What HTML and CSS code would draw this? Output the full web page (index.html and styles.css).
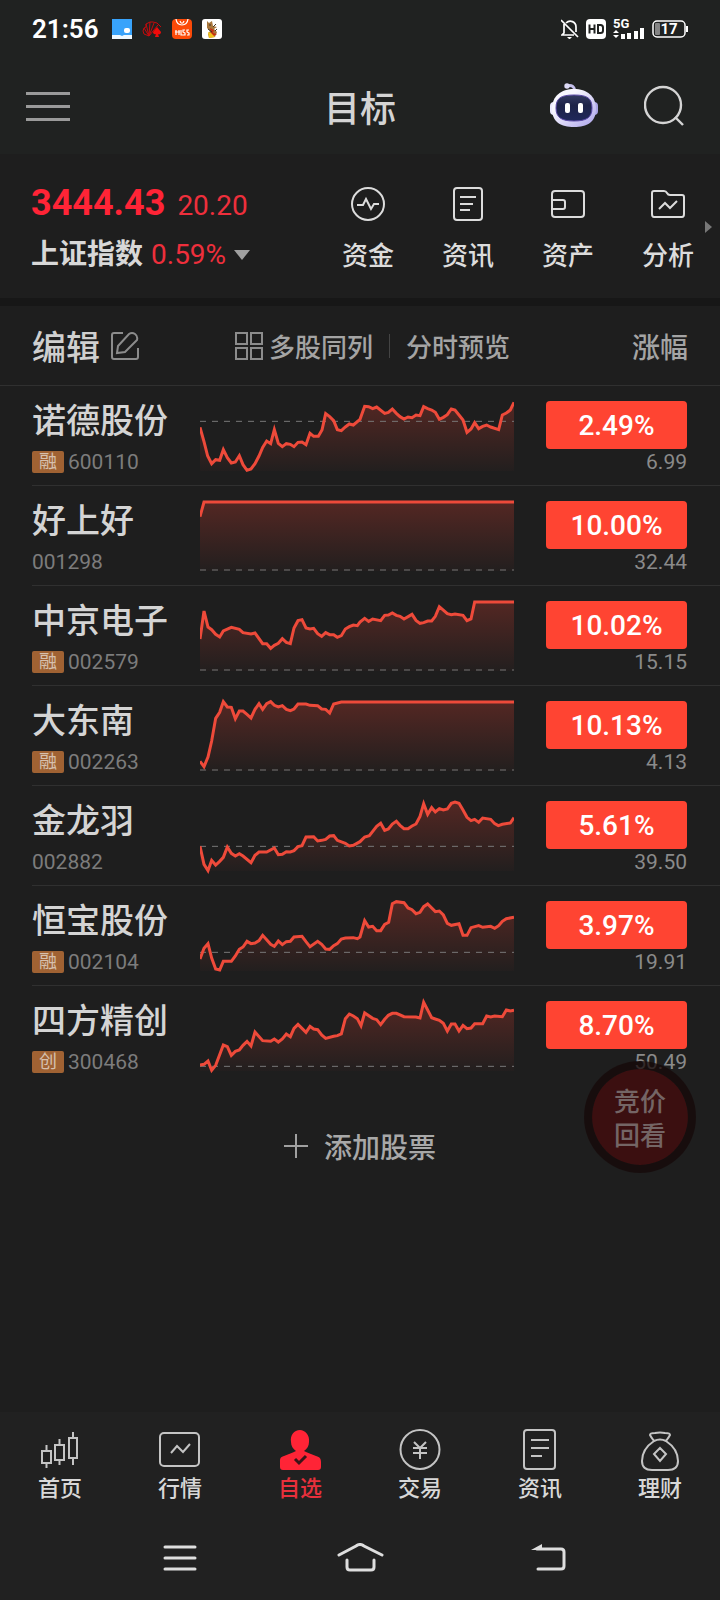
FILE: index.html
```html
<!DOCTYPE html>
<html lang="zh-CN">
<head>
    <meta charset="UTF-8">
    <meta name="viewport" content="width=device-width, initial-scale=1.0">
    <title>自选</title>
    <link rel="stylesheet" href="styles.css">
</head>
<body>

    <div class="status-bar">
        <span class="time">21:56</span>
        <div class="status-apps">
            <svg width="20" height="20" viewBox="0 0 20 20"><rect width="20" height="20" fill="#38a3fb"/><path d="M0 16h8l2 1 2-1h8v4H0z" fill="#eef8ff"/><rect x="12" y="9" width="6" height="5" rx="2" fill="#fff"/></svg>
            <svg width="20" height="20" viewBox="0 0 20 20" fill="none" stroke="#c4090c" stroke-width="1"><path d="M7 17L2 15l-1-3 1-3 2-1 0-3 4-2 3 0 4 1 4 4M7 17L2 9M7 17L4 5M7 17L8 3M7 17l5-13M7 17l9-11"/><path d="M15 8l4 5c0 2-2 3-3 2l1 3h-4l1-3c-2 1-3-1-3-2z" fill="#f00a0a" stroke="none"/></svg>
            <svg width="20" height="20" viewBox="0 0 20 20" fill="none" stroke="#fff" stroke-width="1.2"><rect width="20" height="20" rx="4" fill="#fb4a08" stroke="none"/><path d="M4 0c1 8 11 8 12 0M8 2c1 3 3 3 4 0M4 11v5M7 11v5M3 13h5M9 11v5h2M13 11h-2v2l2 1v2h-2M17 11h-2v2l2 1v2h-2"/></svg>
            <svg width="20" height="20" viewBox="0 0 20 20"><rect width="20" height="20" rx="3" fill="#fff"/><path d="M5 2l2 2 3-2 1 5 4 1-3 2 3 3-2 5-6 1-1-4 2-3-3-3z" fill="#a8773c"/><path d="M8 9l4 2-1 3 4 1-5 3z" fill="#c62f12"/><path d="M6 13l3 1 4 4-6 1z" fill="#f2c21c"/><path d="M7 6h2M11 8l3-3M6 10l4 3M13 12l2-2" stroke="#432" stroke-width="1"/></svg>
        </div>
        <div class="status-icons">
            <svg width="18" height="20" viewBox="0 0 18 20" fill="none" stroke="#fff" stroke-width="1.7"><path d="M3 5v9l-2 2h12M5 4c4-4 10-1 10 4v5M0 1l17 17"/><path d="M6 18h5l-2 2H8z" fill="#fff" stroke="none"/></svg>
            <svg width="20" height="20" viewBox="0 0 20 20"><rect width="20" height="20" rx="4" fill="#fff"/><path d="M3.500 5.500v9M8.500 5.500v9M3.500 10h5M12 6v8h2.500q2.500 0 2.500-2.500v-3q0-2.500-2.500-2.500z" fill="none" stroke="#202221" stroke-width="2"/></svg>
            <svg width="32" height="24" viewBox="0 -2 32 24" fill="#fff"><text x="0" y="9" class="net-text">5G</text><path d="M0 14l3-3 3 3zM0 16h6l-3 3zM8 15h4v5H8zM14 14h4v6h-4zM21 12h4v8h-4zM27 9h4v11h-4z"/></svg>
            <svg width="36" height="18" viewBox="0 0 36 18"><rect x="1" y="1" width="32" height="16" rx="4" fill="none" stroke="#fff" stroke-width="1.500"/><rect x="3" y="3" width="5" height="12" rx="1" fill="#858585"/><path d="M35 6v6" stroke="#fff" stroke-width="2"/><text x="17" y="14" text-anchor="middle" class="battery-text" fill="#fff">17</text></svg>
        </div>
    </div>

    <header class="header">
        <button class="icon-btn menu-btn" aria-label="菜单">
            <svg width="44" height="30" viewBox="0 0 44 30" stroke="#9a9a9a" stroke-width="3"><path d="M0 2.500h44M0 15.500h44M0 28.500h44"/></svg>
        </button>
        <h1>目标</h1>
        <div class="header-actions">
            <button class="icon-btn" aria-label="助手">
                <svg width="48" height="46" viewBox="0 0 48 46">
                    <defs>
                        <linearGradient id="robotHead" x1="0" y1="0" x2="1" y2="1"><stop offset="0.300" stop-color="#f8f7ff"/><stop offset="1" stop-color="#aaa2ea"/></linearGradient>
                        <linearGradient id="robotFace" x1="0" y1="0" x2="0" y2="1"><stop offset="0" stop-color="#343a62"/><stop offset="0.400" stop-color="#1d2348"/><stop offset="1" stop-color="#20285a"/></linearGradient>
                    </defs>
                    <path d="M17 3q7-2 8 5" fill="none" stroke="#c5c0ec" stroke-width="3"/>
                    <circle cx="17" cy="3" r="2.700" fill="#dddaf6"/>
                    <rect x="0" y="19" width="9" height="13" rx="4" fill="#eceaff"/>
                    <rect x="39" y="19" width="9" height="13" rx="4" fill="#aba5e6"/>
                    <path d="M24 6C11 6 2 13 2 26s9 18 22 18 22-5 22-18S37 6 24 6z" fill="url(#robotHead)"/>
                    <path d="M24 12c-13 0-18 3-18 13s6 13 18 13 18-3 18-13-5-13-18-13z" fill="url(#robotFace)" stroke="#5b49a8" stroke-width="1"/>
                    <rect x="15" y="20" width="5" height="10" rx="2" fill="#fff"/>
                    <rect x="28" y="20" width="5" height="10" rx="2" fill="#fff"/>
                </svg>
            </button>
            <button class="icon-btn" aria-label="搜索">
                <svg width="40" height="42" viewBox="0 0 40 42" fill="none" stroke="#d4d4d4" stroke-width="2.400"><circle cx="19" cy="20" r="18"/><path d="M31 32l8 8"/></svg>
            </button>
        </div>
    </header>

    <section class="summary">
        <button class="index">
            <span class="index-top"><b>3444.43</b><span>20.20</span></span>
            <span class="index-bottom"><strong>上证指数</strong><span>0.59%</span><i class="arrow-down"></i></span>
        </button>
        <nav class="shortcuts">
            <a href="#">
                <svg width="34" height="34" viewBox="0 0 34 34"><circle cx="17" cy="17" r="16"/><path d="M6 18h6l3-6 5 10 3-5h5"/></svg>
                资金
            </a>
            <a href="#">
                <svg width="34" height="34" viewBox="0 0 34 34"><rect x="3" y="1" width="28" height="32" rx="3"/><path d="M9 10h16M9 17h13M9 23h10"/></svg>
                资讯
            </a>
            <a href="#">
                <svg width="34" height="34" viewBox="0 0 34 34"><rect x="1" y="4" width="32" height="26" rx="3"/><path d="M1 13h11q2 0 2 2v5q0 2-2 2H1"/></svg>
                资产
            </a>
            <a href="#">
                <svg width="34" height="34" viewBox="0 0 34 34"><path d="M1 27V6q0-2 2-2h10q2 0 3 2t3 2h12q2 0 2 2v17q0 3-2 3H3q-2 0-2-3z"/><path d="M8 22l6-6 5 5 7-7"/></svg>
                分析
            </a>
        </nav>
        <i class="arrow-right"></i>
    </section>

    <main class="watchlist">
        <div class="toolbar">
            <button class="edit-btn">
                编辑
                <svg width="30" height="30" viewBox="0 0 30 30"><path d="M13 2H4Q2 2 2 4v22q0 2 2 2h22q2 0 2-2V17"/><path d="M7 22l1-7L19 3q3-2 6 0t2 6L15 21z"/></svg>
            </button>
            <button class="multi-btn">
                <svg width="28" height="28" viewBox="0 0 28 28"><path d="M1 1h11v11H1zM16 1h11v11H16zM1 16h11v11H1zM16 16h11v11H16z"/></svg>
                多股同列
            </button>
            <span class="divider"></span>
            <button>分时预览</button>
            <button class="sort-btn">涨幅</button>
        </div>

        <svg class="chart-defs" aria-hidden="true">
            <defs>
                <linearGradient id="chartFill" gradientUnits="userSpaceOnUse" x1="0" y1="50" x2="0" y2="258">
                    <stop offset="0" stop-color="#ff4432" stop-opacity="0.240"/>
                    <stop offset="1" stop-color="#ff4432" stop-opacity="0.020"/>
                </linearGradient>
            </defs>
        </svg>

        <ul class="stocks">
            <li class="stock">
                <div class="stock-info">
                    <h2>诺德股份</h2>
                    <p><span class="tag">融</span>600110</p>
                </div>
                <svg class="chart" viewBox="0 3 942 297" preserveAspectRatio="none" data-base="109" data-points="0,127 12,170 23,213 35,236 47,224 59,226 70,194 82,218 94,234 106,231 118,212 129,239 141,256 153,252 165,236 177,213 188,187 200,168 212,176 223,134 235,175 247,185 259,176 271,178 282,185 294,172 306,171 318,179 330,145 341,154 355,154 366,135 377,86 389,95 401,107 412,134 424,137 436,126 448,117 460,120 480,103 494,64 506,65 518,71 530,66 554,85 565,82 577,72 589,85 600,95 612,102 624,96 636,98 648,90 660,92 671,65 683,71 695,75 706,82 718,103 730,97 742,89 754,72 765,75 777,90 789,105 801,142 813,132 824,113 836,131 848,124 860,120 872,126 896,134 907,90 919,84 931,75 942,52"></svg>
                <div class="stock-quote">
                    <button class="change">2.49%</button>
                    <span class="price">6.99</span>
                </div>
            </li>
            <li class="stock">
                <div class="stock-info">
                    <h2>好上好</h2>
                    <p>001298</p>
                </div>
                <svg class="chart" viewBox="0 3 942 297" preserveAspectRatio="none" data-base="255" data-points="0,95 12,51 942,51"></svg>
                <div class="stock-quote">
                    <button class="change">10.00%</button>
                    <span class="price">32.44</span>
                </div>
            </li>
            <li class="stock">
                <div class="stock-info">
                    <h2>中京电子</h2>
                    <p><span class="tag">融</span>002579</p>
                </div>
                <svg class="chart" viewBox="0 3 942 297" preserveAspectRatio="none" data-base="255" data-points="0,162 12,78 24,126 35,134 47,148 59,156 70,138 94,127 118,133 129,143 153,147 165,144 188,176 200,176 212,190 223,181 235,175 247,161 259,172 271,176 282,129 294,107 306,104 318,129 330,132 341,130 353,146 365,154 377,143 389,149 401,149 412,157 424,152 436,132 448,125 460,120 472,122 480,111 494,100 506,109 518,102 542,107 554,91 565,90 577,84 589,91 600,94 612,102 636,88 648,106 660,115 671,113 683,108 695,108 706,94 718,65 742,86 754,89 765,87 789,91 801,107 813,102 824,51 942,51"></svg>
                <div class="stock-quote">
                    <button class="change">10.02%</button>
                    <span class="price">15.15</span>
                </div>
            </li>
            <li class="stock">
                <div class="stock-info">
                    <h2>大东南</h2>
                    <p><span class="tag">融</span>002263</p>
                </div>
                <svg class="chart" viewBox="0 3 942 297" preserveAspectRatio="none" data-base="255" data-points="0,229 12,245 24,216 35,168 47,100 59,82 70,50 82,66 94,67 106,101 118,78 129,78 141,88 153,99 165,73 177,56 188,73 200,56 212,50 223,61 235,66 247,62 259,73 271,77 282,72 294,57 318,57 330,61 353,62 365,72 377,73 389,84 401,57 424,51 942,51"></svg>
                <div class="stock-quote">
                    <button class="change">10.13%</button>
                    <span class="price">4.13</span>
                </div>
            </li>
            <li class="stock">
                <div class="stock-info">
                    <h2>金龙羽</h2>
                    <p>002882</p>
                </div>
                <svg class="chart" viewBox="0 3 942 297" preserveAspectRatio="none" data-base="184" data-points="0,184 12,238 24,257 35,226 47,240 59,229 70,217 82,186 94,205 106,213 118,206 129,213 153,233 165,211 177,201 200,201 223,189 235,209 247,208 259,200 271,201 282,197 294,185 306,182 318,156 341,155 353,168 365,166 377,163 389,153 401,152 412,166 436,175 448,183 460,181 480,170 494,156 508,152 530,124 542,115 554,136 565,132 577,117 589,109 600,121 612,131 624,131 636,123 648,117 660,94 671,56 683,88 695,68 706,81 718,71 730,75 742,72 754,55 765,51 777,55 789,75 801,97 813,107 824,103 836,112 848,99 872,103 884,116 895,122 907,118 931,114 942,98"></svg>
                <div class="stock-quote">
                    <button class="change">5.61%</button>
                    <span class="price">39.50</span>
                </div>
            </li>
            <li class="stock">
                <div class="stock-info">
                    <h2>恒宝股份</h2>
                    <p><span class="tag">融</span>002104</p>
                </div>
                <svg class="chart" viewBox="0 3 942 297" preserveAspectRatio="none" data-base="202" data-points="0,222 12,190 24,176 35,219 47,252 59,255 70,229 94,229 106,213 118,193 129,186 141,169 153,176 165,174 177,167 188,151 200,164 212,178 223,184 235,168 247,179 259,170 271,169 282,156 306,154 318,170 330,185 353,169 365,178 377,192 389,193 401,182 412,176 424,162 436,159 460,158 472,161 480,156 494,107 506,126 518,124 530,137 542,137 554,118 566,112 577,56 589,50 612,53 624,69 636,74 648,86 660,82 671,65 683,57 706,80 718,78 730,90 742,115 754,121 777,116 789,151 801,151 813,128 836,122 848,127 872,124 884,130 896,122 907,109 919,101 942,97"></svg>
                <div class="stock-quote">
                    <button class="change">3.97%</button>
                    <span class="price">19.91</span>
                </div>
            </li>
            <li class="stock">
                <div class="stock-info">
                    <h2>四方精创</h2>
                    <p><span class="tag">创</span>300468</p>
                </div>
                <svg class="chart" viewBox="0 3 942 297" preserveAspectRatio="none" data-base="244" data-points="0,240 12,238 24,228 35,256 47,241 70,180 82,185 94,211 106,199 118,195 129,181 141,169 153,183 165,141 188,167 212,169 223,162 235,171 247,162 259,147 271,155 282,130 294,118 318,142 330,124 341,132 353,134 365,150 377,160 401,154 412,152 424,147 436,101 448,87 460,93 472,101 483,122 494,84 518,100 530,104 542,119 554,103 565,91 577,85 589,85 612,95 648,96 660,99 671,52 695,98 706,102 718,106 730,115 742,138 754,117 765,117 777,138 789,121 801,131 813,129 824,116 848,116 860,93 872,96 884,93 907,95 919,75 931,78 942,76"></svg>
                <div class="stock-quote">
                    <button class="change">8.70%</button>
                    <span class="price">50.49</span>
                </div>
            </li>
        </ul>

        <div class="add-row">
            <button class="add-btn">
                <svg width="24" height="24" viewBox="0 0 24 24" stroke="#a0a0a0" stroke-width="2"><path d="M0 12h24M12 0v24"/></svg>
                添加股票
            </button>
            <button class="replay-btn">竞价<br>回看</button>
        </div>
    </main>

    <nav class="tab-bar">
        <a href="#">
            <svg width="42" height="42" viewBox="0 0 42 42"><path d="M3 22h9v12H3zM7.500 16v6M7.500 34v5M16 16h9v15h-9zM20.500 10v6M20.500 31v5M30 9h8v20h-8zM34 3v6M34 29v7"/></svg>
            首页
        </a>
        <a href="#">
            <svg width="42" height="42" viewBox="0 0 42 42"><rect x="1" y="4" width="39" height="33" rx="4"/><path d="M12 24l6-7 6 6 7-8"/></svg>
            行情
        </a>
        <a href="#" class="active">
            <svg width="42" height="42" viewBox="0 0 42 42"><path class="solid" d="M21 1c-6 0-10 5-9 12 0 4 2 7 5 9-3 2-8 3-12 5-4 1-4 3-4 6v5q0 3 3 3h35q3 0 3-3v-5c0-3-1-5-5-6-4-2-9-3-12-5 3-2 5-5 5-9 1-7-4-12-9-12z"/><path class="tick" d="M16 30l4 4 7-7"/></svg>
            自选
        </a>
        <a href="#">
            <svg width="42" height="42" viewBox="0 0 42 42"><circle cx="21" cy="20.500" r="19.500"/><path d="M15 13l6 6 6-6M14 19h14M14 24h14M21 19v11"/></svg>
            交易
        </a>
        <a href="#">
            <svg width="42" height="42" viewBox="0 0 42 42"><rect x="5" y="1" width="31" height="39" rx="3"/><path d="M12 11h18M12 19h18M12 27h11"/></svg>
            资讯
        </a>
        <a href="#">
            <svg width="42" height="42" viewBox="0 0 42 42"><path d="M15 12q-3-4-4-6 0-2 5-2 5-1 10 0 5 0 5 2-1 2-4 6M15 12q6-3 12 0 12 8 12 20 0 9-10 9H13Q3 41 3 32q0-12 12-20zM21 19l6 6-6 7-6-7z"/></svg>
            理财
        </a>
    </nav>

    <div class="system-nav">
        <button class="icon-btn" aria-label="最近任务"><svg width="60" height="30" viewBox="0 0 60 30"><path d="M15 4h30M15 15h30M15 26h30"/></svg></button>
        <button class="icon-btn" aria-label="主页"><svg width="60" height="30" viewBox="0 0 60 30"><path d="M9 12L26 3q4-3 8 0l18 9M17 17v7q0 3 3 3h21q3 0 3-3v-7"/></svg></button>
        <button class="icon-btn" aria-label="返回"><svg width="60" height="30" viewBox="0 0 60 30"><path d="M27 6h24q3 0 3 3v14q0 3-3 3H28"/><path class="head" d="M21 7l11-6v6z"/></svg></button>
    </div>

    <script src="chart.js"></script>
</body>
</html>
```
FILE: styles.css
```css
*{
    box-sizing: border-box;
}

body{
    margin: 0;
    min-height: 100vh;
    display: flex;
    flex-direction: column;
    background-color: #1e1e1e;
    color: #d4d4d4;
    font-family: Roboto, "Noto Sans CJK SC", sans-serif;
}

h1, h2, p, ul{
    margin: 0;
    padding: 0;
    font-weight: 500;
}

svg{
    display: block;
    flex-shrink: 0;
}

button{
    margin: 0;
    padding: 0;
    border: 0;
    background: none;
    color: inherit;
    font: inherit;
}

a{
    color: inherit;
    text-decoration: none;
}

/* status bar */
.status-bar{
    display: flex;
    align-items: center;
    height: 58px;
    padding: 0 32px;
    background-color: #202221;
    color: #fff;
}

.time{
    font-size: 26px;
    font-weight: 600;
}

.status-apps{
    display: flex;
    gap: 10px;
    margin-left: 13px;
}

.status-icons{
    display: flex;
    align-items: center;
    gap: 7px;
    margin-left: auto;
}

.net-text{
    font-size: 13px;
    font-weight: 700;
}

.battery-text{
    font-size: 15px;
    font-weight: 700;
}

/* header */
.header{
    display: grid;
    grid-template-columns: 1fr auto 1fr;
    align-items: center;
    height: 96px;
    padding: 0 26px;
    background-color: #202221;
}

.header h1{
    font-size: 36px;
}

.header-actions{
    display: flex;
    align-items: center;
    justify-content: flex-end;
    gap: 46px;
    padding-right: 10px;
}

/* index and shortcuts */
.summary{
    position: relative;
    display: flex;
    height: 152px;
    border-bottom: 8px solid #171717;
}

.index{
    flex: 1;
    align-self: flex-start;
    padding: 26px 0 0 31px;
    text-align: left;
}

.index-top,
.index-bottom{
    display: flex;
    align-items: baseline;
    color: #ee2f3c;
    font-size: 28px;
}

.index-top{
    gap: 12px;
    line-height: 46px;
}

.index-top b{
    color: #ff2436;
    font-size: 36px;
}

.index-bottom{
    gap: 8px;
    line-height: 52px;
}

.index-bottom strong{
    color: #d8d8d8;
}

.arrow-down{
    align-self: center;
    border: 8px solid transparent;
    border-top: 10px solid #a0a0a0;
    border-bottom: 0;
}

.arrow-right{
    position: absolute;
    top: 67px;
    right: 8px;
    border: 6px solid transparent;
    border-left: 7px solid #777;
    border-right: 0;
}

.shortcuts{
    display: flex;
    padding-right: 2px;
}

.shortcuts a{
    display: flex;
    flex-direction: column;
    align-items: center;
    gap: 15px;
    width: 100px;
    padding-top: 33px;
    color: #dcdcdc;
    font-size: 26px;
    font-weight: 500;
    line-height: 40px;
}

.shortcuts svg{
    fill: none;
    stroke: #dcdcdc;
    stroke-width: 2;
}

/* watchlist */
.watchlist{
    flex: 1;
}

.toolbar{
    display: flex;
    align-items: center;
    height: 80px;
    padding: 0 32px;
    border-bottom: 1px solid #303030;
    color: #a4a4a4;
    font-size: 26px;
    font-weight: 500;
}

.toolbar svg{
    fill: none;
    stroke: #8c8c8c;
    stroke-width: 2;
}

.edit-btn,
.multi-btn{
    display: flex;
    align-items: center;
    gap: 10px;
}

.edit-btn{
    width: 203px;
    color: #cfcfcf;
    font-size: 34px;
    font-weight: 500;
}

.multi-btn{
    gap: 6px;
}

.divider{
    width: 1px;
    height: 24px;
    margin: 0 16px;
    background-color: #444;
}

.sort-btn{
    margin-left: auto;
    font-size: 28px;
}

.chart-defs{
    width: 0;
    height: 0;
}

.stocks{
    padding-left: 32px;
    list-style: none;
}

.stock{
    display: flex;
    height: 100px;
    padding-right: 33px;
    border-bottom: 1px solid #303030;
}

.stock:last-child{
    border-color: transparent;
}

.stock-info{
    width: 168px;
    padding-top: 10px;
}

.stock-info h2{
    font-size: 34px;
    line-height: 50px;
}

.stock-info p{
    display: flex;
    align-items: center;
    gap: 4px;
    height: 32px;
    color: #7c7c7c;
    font-size: 21px;
    font-weight: 400;
}

.tag{
    width: 32px;
    height: 22px;
    border-radius: 2px;
    background-color: #a06233;
    color: #d6c0ae;
    font-size: 18px;
    line-height: 22px;
    text-align: center;
}

.chart{
    flex: 1;
    min-width: 0;
    height: 99px;
}

.chart-area{
    fill: url(#chartFill);
}

.chart-base{
    stroke: #777;
    stroke-width: 1;
    stroke-dasharray: 6 6;
    vector-effect: non-scaling-stroke;
}

.chart-line{
    fill: none;
    stroke: #ee4a3a;
    stroke-width: 3;
    vector-effect: non-scaling-stroke;
}

.stock-quote{
    display: flex;
    flex-direction: column;
    width: 141px;
    margin-left: 32px;
    padding-top: 15px;
}

.change{
    height: 48px;
    border-radius: 4px;
    background-color: #ff4432;
    color: #fff;
    font-size: 28px;
    font-weight: 500;
}

.price{
    color: #8a8a8a;
    font-size: 21px;
    font-weight: 400;
    line-height: 26px;
    text-align: right;
}

.add-row{
    position: relative;
    display: flex;
    justify-content: center;
    padding-top: 40px;
}

.add-btn{
    display: flex;
    align-items: center;
    gap: 16px;
    color: #a8a8a8;
    font-size: 28px;
    font-weight: 500;
}

.replay-btn{
    position: absolute;
    top: -25px;
    right: 24px;
    width: 112px;
    height: 112px;
    padding-top: 3px;
    border: 8px solid rgba(22, 8, 8, 0.750);
    border-radius: 50%;
    background-color: #3b0f10;
    background-clip: padding-box;
    color: #746565;
    font-size: 26px;
    font-weight: 500;
    line-height: 34px;
}

/* bottom bars */
.tab-bar{
    display: flex;
    height: 102px;
    padding-top: 17px;
    background-color: #212121;
}

.tab-bar a{
    flex: 1;
    display: flex;
    flex-direction: column;
    align-items: center;
    gap: 2px;
    color: #d8d8d8;
    font-size: 22px;
    font-weight: 500;
    line-height: 32px;
}

.tab-bar svg{
    fill: none;
    stroke: #c4c4c4;
    stroke-width: 2;
}

.tab-bar .active{
    color: #e8303c;
}

.tab-bar .solid{
    fill: #ff2436;
    stroke: none;
}

.tab-bar .tick{
    stroke: #3a1519;
    stroke-width: 3;
}

.system-nav{
    display: flex;
    justify-content: space-evenly;
    align-items: center;
    height: 86px;
    padding: 2px 30px 0;
    background-color: #212121;
}

.system-nav svg{
    fill: none;
    stroke: #dedede;
    stroke-width: 3;
    stroke-linecap: round;
}

.system-nav .head{
    fill: #dedede;
    stroke: none;
}
```
FILE: chart.js
```js
const SVG_NS = "http://www.w3.org/2000/svg";

function addShape(chart, tag, attrs) {
    const shape = document.createElementNS(SVG_NS, tag);
    for (const name in attrs) {
        shape.setAttribute(name, attrs[name]);
    }
    chart.appendChild(shape);
}

document.querySelectorAll(".chart").forEach(chart => {
    const points = chart.dataset.points;
    const base = chart.dataset.base;

    addShape(chart, "polygon", { class: "chart-area", points: "0,258 " + points + " 942,258" });
    addShape(chart, "line", { class: "chart-base", x1: 0, x2: 942, y1: base, y2: base });
    addShape(chart, "polyline", { class: "chart-line", points: points });
});
```
